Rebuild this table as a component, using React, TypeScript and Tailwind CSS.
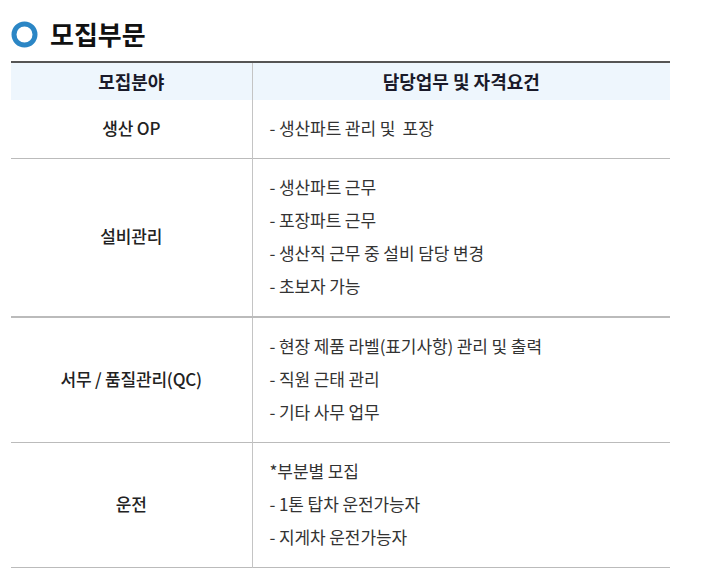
import React from "react";

/**
 * 모집부문 rows: field name + list of duties
 */
const rows: { field: string; duties: string[]; thick?: boolean }[] = [
    { field: "생산 OP", duties: ["- 생산파트 관리 및  포장"] },
    {
        field: "설비관리",
        duties: [
            "- 생산파트 근무",
            "- 포장파트 근무",
            "- 생산직 근무 중 설비 담당 변경",
            "- 초보자 가능",
        ],
        thick: true,
    },
    {
        field: "서무 / 품질관리(QC)",
        duties: [
            "- 현장 제품 라벨(표기사항) 관리 및 출력",
            "- 직원 근태 관리",
            "- 기타 사무 업무",
        ],
    },
    {
        field: "운전",
        duties: ["*부분별 모집", "- 1톤 탑차 운전가능자", "- 지게차 운전가능자"],
    },
];

const App: React.FC = () => {
    return (
        <div
            className="w-[702px] h-[585px] bg-white pl-[11px] pt-[20px]"
            style={{ fontFamily: '"Noto Sans CJK KR", "Noto Sans", sans-serif' }}
        >
            <div className="flex items-center gap-[12px] h-[28px]">
                <svg width="27" height="27" viewBox="0 0 27 27">
                    <circle cx="13.5" cy="13.5" r="10.5" fill="none" stroke="#2b86c5" strokeWidth="5" />
                </svg>
                <h1 className="text-[26px] font-bold text-[#111] leading-none">모집부문</h1>
            </div>

            <table className="mt-[13px] w-[659px] border-collapse border-t-2 border-t-[#555]">
                <thead>
                    <tr className="bg-[#eef6fd] h-[38px]">
                        <th className="w-[241px] border-r border-r-[#c4c4c4] text-[18px] font-bold text-[#1a1a2a]">
                            모집분야
                        </th>
                        <th className="text-[18px] font-bold text-[#1a1a2a]">담당업무 및 자격요건</th>
                    </tr>
                </thead>
                <tbody>
                    {rows.map((row) => (
                        <tr
                            key={row.field}
                            className={
                                row.thick
                                    ? "border-b-2 border-b-[#bbbbbb]"
                                    : "border-b border-b-[#bbbbbb]"
                            }
                        >
                            <td className="border-r border-r-[#c4c4c4] text-center text-[17px] font-medium text-[#222] tracking-[-0.2px] pb-[3px]">
                                {row.field}
                            </td>
                            <td className="pl-[17px] pt-[11px] pb-[14px]">
                                {row.duties.map((d) => (
                                    <p
                                        key={d}
                                        className="text-[17px] leading-[33px] text-[#333] whitespace-pre tracking-[-0.1px]"
                                    >
                                        {d}
                                    </p>
                                ))}
                            </td>
                        </tr>
                    ))}
                </tbody>
            </table>
        </div>
    );
};

export default App;
